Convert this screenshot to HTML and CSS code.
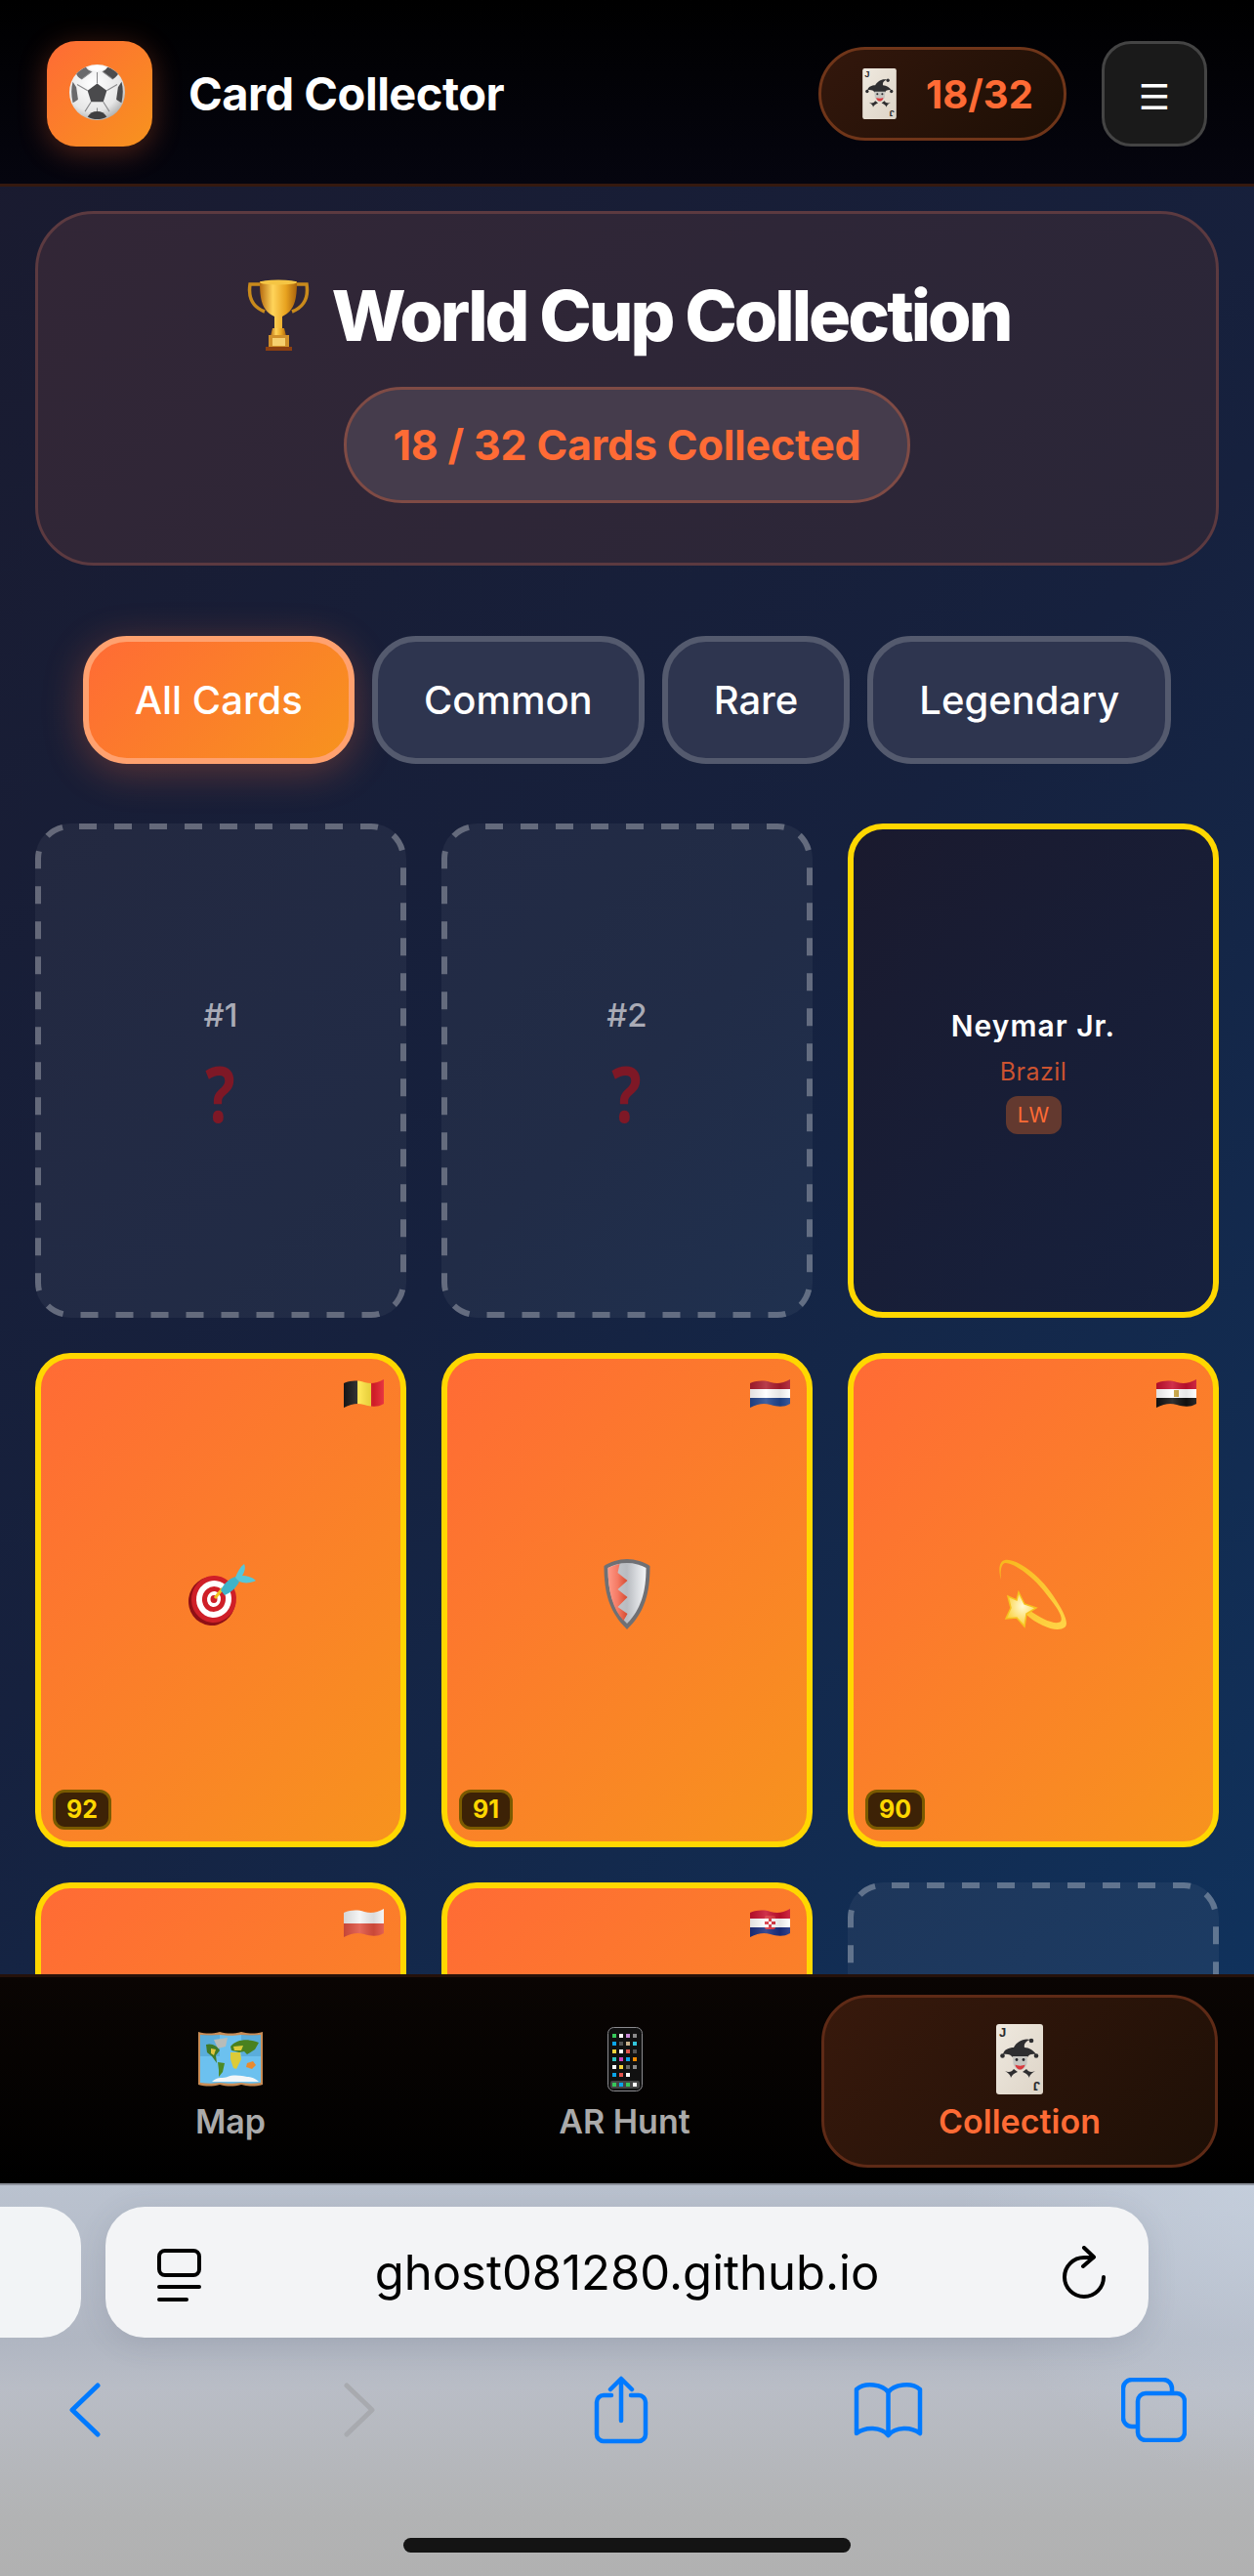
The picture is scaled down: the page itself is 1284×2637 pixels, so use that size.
FILE: index.html
```html
<!DOCTYPE html>
<html lang="en">

<head>
    <meta charset="UTF-8">
    <meta name="viewport" content="width=device-width, initial-scale=1.0">
    <title>Card Collector</title>
    <link rel="stylesheet" href="styles.css">
</head>

<body>
    <!-- shared drawings -->
    <svg class="defs" aria-hidden="true">
        <defs>
            <clipPath id="wave">
                <path d="M0 4C8 1 14 1 21 3S34 4 41 0V25C34 29 28 28 21 26S8 25 0 29Z" />
            </clipPath>
            <linearGradient id="gloss" x1="0" y1="0" x2="1" y2="0">
                <stop offset="0" stop-color="#000" stop-opacity=".12" />
                <stop offset=".4" stop-color="#fff" stop-opacity=".14" />
                <stop offset=".75" stop-color="#000" stop-opacity=".1" />
                <stop offset="1" stop-color="#fff" stop-opacity=".1" />
            </linearGradient>
            <linearGradient id="gold" x1="0" y1="0" x2="1" y2="0">
                <stop offset="0" stop-color="#b56a10" />
                <stop offset=".35" stop-color="#ffd45a" />
                <stop offset=".7" stop-color="#e8a320" />
                <stop offset="1" stop-color="#a9620c" />
            </linearGradient>
            <linearGradient id="steel" x1="0" y1="0" x2="1" y2="0">
                <stop offset="0" stop-color="#c9ccd0" />
                <stop offset=".5" stop-color="#b9bcc1" />
                <stop offset="1" stop-color="#f4f6f8" />
            </linearGradient>
            <linearGradient id="shieldRed" x1="0" y1="0" x2="1" y2="0">
                <stop offset="0" stop-color="#ff9a88" />
                <stop offset=".5" stop-color="#f47a64" />
                <stop offset="1" stop-color="#d64a30" />
            </linearGradient>
            <linearGradient id="ringGold" x1="0" y1="0" x2="1" y2="1">
                <stop offset="0" stop-color="#f7b71c" />
                <stop offset="1" stop-color="#ffd548" />
            </linearGradient>
            <radialGradient id="starFill" cx=".55" cy=".4" r=".6">
                <stop offset="0" stop-color="#fffbd6" />
                <stop offset="1" stop-color="#fbcf38" />
            </radialGradient>
            <radialGradient id="ballShade" cx=".42" cy=".35" r=".7">
                <stop offset="0" stop-color="#fff" />
                <stop offset=".7" stop-color="#e6e6e6" />
                <stop offset="1" stop-color="#a9a9a9" />
            </radialGradient>
            <linearGradient id="paper" x1="0" y1="0" x2="1" y2="1">
                <stop offset="0" stop-color="#efe9df" />
                <stop offset="1" stop-color="#ddd4c7" />
            </linearGradient>
            <symbol id="joker" viewBox="0 0 48 72">
                <rect width="48" height="72" rx="3" fill="url(#paper)" />
                <text x="3" y="13" class="joker-j">J</text>
                <text x="3" y="13" class="joker-j" transform="rotate(180 24 36)">J</text>
                <path d="M7 31C8 26 13 24 18 24C21 18 28 14 35 16C31 17 28 20 29 24C34 24 38 27 41 31C37 30 33 31 32 34H17C15 31 11 30 7 31Z" fill="#2e2e30" />
                <circle cx="6.500" cy="32.500" r="2.300" fill="#2e2e30" />
                <circle cx="41" cy="32.500" r="2.300" fill="#2e2e30" />
                <circle cx="36" cy="17" r="2.300" fill="#2e2e30" />
                <path d="M17 33H32L31.500 41C30 45 27 47 24.500 47C22 47 19 45 17.500 41Z" fill="#c6c5c0" />
                <circle cx="21" cy="36.500" r="1.400" fill="#27272a" />
                <circle cx="28" cy="36.500" r="1.400" fill="#27272a" />
                <path d="M19.500 41.500C22 43 27 43 29.500 41.500C29 45 26.500 46.500 24.500 46.500C22.500 46.500 20 45 19.500 41.500Z" fill="#d93a3e" />
                <path d="M9 48C13 50 16 49 18 46L22 49C19 50 16 52 15 55C15 52 12 50 9 48ZM40 48C36 50 33 49 31 46L27 49C30 50 33 52 34 55C34 52 37 50 40 48Z" fill="#2e2e30" />
            </symbol>
        </defs>
    </svg>

    <div class="screen">
        <div class="app">
            <header class="topbar">
                <div class="logo">
                    <svg class="ball" viewBox="0 0 64 64" aria-hidden="true">
                        <circle cx="32" cy="32" r="32" fill="url(#ballShade)" />
                        <path d="M32 22L43 30L39 43H25L21 30Z" fill="#4a4a4c" />
                        <path d="M21 3C27 9 37 9 43 3C37 0 27 0 21 3Z" fill="#fff" />
                        <path d="M44 3C42 6 40 7 38 8L50 17C54 14 55 13 56 11C53 7 49 5 44 3Z" fill="#4c4c4e" />
                        <path d="M19 3C21 6 23 7 26 8L14 17C10 15 9 13 8 11C11 7 15 5 19 3Z" fill="#6a6a6c" />
                        <path d="M60 20C62 27 62 35 60 44C57 42 55 41 54 40L56 26Z" fill="#4a4a4c" />
                        <path d="M4 20C2 27 2 35 4 44C7 42 9 41 10 40L8 26Z" fill="#6a6a6c" />
                        <path d="M21 60C28 64 36 64 43 60C40 56 37 54 32 54C27 54 24 56 21 60Z" fill="#3f3f41" />
                        <path d="M32 22V9M43 30L55 23M39 43L46 54M25 43L18 54M21 30L9 23M26 8L14 17M38 8L50 17M32 54V50" stroke="#8a8a8c" stroke-width="1.200" fill="none" />
                    </svg>
                </div>
                <div class="app-name">Card Collector</div>
                <div class="count-pill">
                    <svg class="joker-small" aria-hidden="true"><use href="#joker" /></svg>
                    <span>18/32</span>
                </div>
                <button class="menu-btn">☰</button>
            </header>

            <main class="content">
                <section class="hero">
                    <h1 class="hero-title">
                        <svg class="trophy" viewBox="0 0 70 73" aria-hidden="true">
                            <path d="M17 5H6C4 18 8 28 21 33M53 5H64C66 18 62 28 49 33" fill="none" stroke="#c98a1c" stroke-width="3.500" />
                            <path d="M16 2H54C54 20 52 32 39 38V50H31V38C18 32 16 20 16 2Z" fill="url(#gold)" />
                            <ellipse cx="35" cy="3" rx="19" ry="2.500" fill="#f5c544" />
                            <path d="M29 50H41L43 58H27Z" fill="url(#gold)" />
                            <rect x="25" y="57" width="21" height="13" fill="#d0902a" />
                            <rect x="29" y="60" width="13" height="8" fill="#f6cf6e" />
                            <rect x="22" y="69" width="27" height="4" fill="#8c3f10" />
                        </svg>
                        World Cup Collection
                    </h1>
                    <div class="hero-count">18 / 32 Cards Collected</div>
                </section>

                <nav class="filters">
                    <button class="filter active">All Cards</button>
                    <button class="filter">Common</button>
                    <button class="filter">Rare</button>
                    <button class="filter">Legendary</button>
                </nav>

                <div class="cards">
                    <div class="card missing">
                        <svg class="dash" viewBox="0 0 380 506" aria-hidden="true"><rect x="3" y="3" width="374" height="500" rx="33" /></svg>
                        <div class="card-num">#1</div>
                        <div class="card-unknown">?</div>
                    </div>
                    <div class="card missing">
                        <svg class="dash" viewBox="0 0 380 506" aria-hidden="true"><rect x="3" y="3" width="374" height="500" rx="33" /></svg>
                        <div class="card-num">#2</div>
                        <div class="card-unknown">?</div>
                    </div>
                    <div class="card back">
                        <div class="player-name">Neymar Jr.</div>
                        <div class="player-country">Brazil</div>
                        <div class="player-pos">LW</div>
                    </div>

                    <div class="card owned">
                        <svg class="flag" viewBox="0 0 41 29" aria-hidden="true">
                            <g clip-path="url(#wave)">
                                <rect width="14" height="29" fill="#1a1a1a" />
                                <rect x="14" width="14" height="29" fill="#fde23c" />
                                <rect x="28" width="13" height="29" fill="#e5202c" />
                                <rect width="41" height="29" fill="url(#gloss)" />
                            </g>
                        </svg>
                        <svg class="skill" viewBox="0 0 72 62" aria-hidden="true">
                            <ellipse cx="27" cy="38" rx="24" ry="25" fill="#8f0f16" transform="rotate(8 27 38)" />
                            <ellipse cx="29" cy="36" rx="23" ry="24" fill="#cf1f28" transform="rotate(8 29 36)" />
                            <ellipse cx="29" cy="36" rx="18" ry="19" fill="#fff" transform="rotate(8 29 36)" />
                            <ellipse cx="29" cy="36" rx="12" ry="13" fill="#cf1f28" transform="rotate(8 29 36)" />
                            <ellipse cx="29" cy="36" rx="7" ry="8" fill="#fff" transform="rotate(8 29 36)" />
                            <ellipse cx="29" cy="36" rx="3.500" ry="4" fill="#cf1f28" />
                            <path d="M30 35L38 25" stroke="#f2c21d" stroke-width="3" />
                            <path d="M36 27C39 20 45 15 51 13L55 18C52 24 47 29 40 32Z" fill="#3fb3c9" />
                            <path d="M51 14C53 8 56 3 60 0C62 4 60 9 58 12C62 12 68 13 72 17C66 20 60 20 55 18Z" fill="#58c6d8" />
                        </svg>
                        <div class="rating">92</div>
                    </div>
                    <div class="card owned">
                        <svg class="flag" viewBox="0 0 41 29" aria-hidden="true">
                            <g clip-path="url(#wave)">
                                <rect width="41" height="10" fill="#ad1d2e" />
                                <rect y="10" width="41" height="9" fill="#fff" />
                                <rect y="19" width="41" height="10" fill="#22468f" />
                                <rect width="41" height="29" fill="url(#gloss)" />
                            </g>
                        </svg>
                        <svg class="skill" viewBox="0 0 47 72" aria-hidden="true">
                            <path d="M23.500 0C32 0 41 3 47 7C47 34 42 54 23.500 72C5 54 0 34 0 7C6 3 15 0 23.500 0Z" fill="#6f7074" />
                            <path d="M23.500 4C31 4 38 6 43 9C43 33 38 51 23.500 66C9 51 4 33 4 9C9 6 16 4 23.500 4Z" fill="url(#steel)" />
                            <path d="M16 5C12 6 8 7 4 9C4 33 9 51 20 63L24 56L14 49L24 39L14 31L24 22L14 14Z" fill="url(#shieldRed)" />
                        </svg>
                        <div class="rating">91</div>
                    </div>
                    <div class="card owned">
                        <svg class="flag" viewBox="0 0 41 29" aria-hidden="true">
                            <g clip-path="url(#wave)">
                                <rect width="41" height="10" fill="#c8102e" />
                                <rect y="10" width="41" height="9" fill="#fff" />
                                <rect y="19" width="41" height="10" fill="#111" />
                                <rect x="18" y="11" width="5" height="7" fill="#c8a33c" />
                                <rect width="41" height="29" fill="url(#gloss)" />
                            </g>
                        </svg>
                        <svg class="skill" viewBox="0 0 70 72" aria-hidden="true">
                            <path d="M2 21C-1 11 0 2 6 1C16 -1 40 14 55 37C67 55 72 66 67 70C60 75 42 70 27 56L31 52C42 61 58 68 63 64C66 60 60 50 50 38C36 18 14 3 6 4C2 5 1 13 2 21Z" fill="url(#ringGold)" />
                            <path d="M20 34L26 46L38 50L28 56L26 69L18 60L7 61L12 50L9 38L18 42Z" fill="url(#starFill)" stroke="#f6c21f" stroke-width="1.500" />
                        </svg>
                        <div class="rating">90</div>
                    </div>

                    <div class="card owned">
                        <svg class="flag" viewBox="0 0 41 29" aria-hidden="true">
                            <g clip-path="url(#wave)">
                                <rect width="41" height="15" fill="#f4f4f4" />
                                <rect y="15" width="41" height="14" fill="#e0503f" />
                                <rect width="41" height="29" fill="url(#gloss)" />
                            </g>
                        </svg>
                    </div>
                    <div class="card owned">
                        <svg class="flag" viewBox="0 0 41 29" aria-hidden="true">
                            <g clip-path="url(#wave)">
                                <rect width="41" height="10" fill="#c8102e" />
                                <rect y="10" width="41" height="9" fill="#fff" />
                                <rect y="19" width="41" height="10" fill="#1c2f80" />
                                <rect x="15" y="7" width="11" height="14" rx="2" fill="#d9303c" />
                                <path d="M15 10h4v3h-4zM22 10h4v3h-4zM19 13h3v3h-3zM15 16h4v3h-4zM22 16h4v3h-4z" fill="#fff" />
                                <rect width="41" height="29" fill="url(#gloss)" />
                            </g>
                        </svg>
                    </div>
                    <div class="card missing">
                        <svg class="dash" viewBox="0 0 380 506" aria-hidden="true"><rect x="3" y="3" width="374" height="500" rx="33" /></svg>
                    </div>
                </div>
            </main>

            <nav class="bottom-nav">
                <div class="nav-item">
                    <div class="nav-icon">
                        <svg class="map-icon" viewBox="0 0 66 58" aria-hidden="true">
                            <path d="M0 1C8 3 14 3 22 1C30 3 36 3 44 1C52 3 58 3 66 1V55C58 57 52 57 44 55C36 57 30 57 22 55C14 57 8 57 0 55Z" fill="#c88c56" />
                            <path d="M2 4C8 5 14 5 22 4C30 5 36 5 44 4C52 5 58 5 64 4V53C58 54 52 54 44 53C36 54 30 54 22 53C14 54 8 54 2 53Z" fill="#6cc1ef" />
                            <path d="M2 4H22V26H2ZM44 4H64V26H44Z" fill="#4d9ccb" opacity=".55" />
                            <path d="M16 9L30 7L28 16L20 18Z" fill="#b8bcb9" />
                            <path d="M8 14C14 12 20 16 22 20L18 25L19 33L14 26L9 22Z" fill="#3f7a27" />
                            <path d="M13 18L18 19L16 25L13 23Z" fill="#e0c53c" />
                            <path d="M20 32L27 33L25 42L21 47L21 40Z" fill="#4c8a25" />
                            <path d="M33 16C40 8 52 8 62 12L58 19L50 24L47 21L42 22L34 20Z" fill="#49811f" />
                            <path d="M36 16L46 15L44 20L37 20ZM33 22L43 22L44 29L39 39L36 38L33 29Z" fill="#dccb38" />
                            <path d="M50 33L56 31L59 35L55 39L49 37Z" fill="#e98a2e" />
                            <path d="M14 52C20 46 26 49 30 47C36 44 46 46 50 47C56 47 60 50 62 52Z" fill="#f2f6f8" />
                        </svg>
                    </div>
                    <div class="nav-label">Map</div>
                </div>
                <div class="nav-item">
                    <div class="nav-icon">
                        <svg class="phone-icon" viewBox="0 0 36 66" aria-hidden="true">
                            <rect x="0.500" y="0.500" width="35" height="65" rx="6" fill="#111" stroke="#8b8b8f" />
                            <g class="app-dots">
                                <rect x="5" y="7" width="4" height="4" fill="#35c759" /><rect x="12" y="7" width="4" height="4" fill="#fff" /><rect x="19" y="7" width="4" height="4" fill="#c98bd8" /><rect x="26" y="7" width="4" height="4" fill="#8a8a8a" />
                                <rect x="5" y="15" width="4" height="4" fill="#0aa5ea" /><rect x="12" y="15" width="4" height="4" fill="#555" /><rect x="19" y="15" width="4" height="4" fill="#c8b08c" /><rect x="26" y="15" width="4" height="4" fill="#33c6dc" />
                                <rect x="5" y="23" width="4" height="4" fill="#f2d33c" /><rect x="12" y="23" width="4" height="4" fill="#fff" /><rect x="19" y="23" width="4" height="4" fill="#e5534b" /><rect x="26" y="23" width="4" height="4" fill="#555" />
                                <rect x="5" y="31" width="4" height="4" fill="#2ec4c4" /><rect x="12" y="31" width="4" height="4" fill="#d13fc0" /><rect x="19" y="31" width="4" height="4" fill="#0aa5ea" /><rect x="26" y="31" width="4" height="4" fill="#f08a00" />
                                <rect x="5" y="39" width="4" height="4" fill="#fff" /><rect x="12" y="39" width="4" height="4" fill="#f2d33c" /><rect x="19" y="39" width="4" height="4" fill="#666" /><rect x="26" y="39" width="4" height="4" fill="#8a8a8a" />
                                <rect x="5" y="47" width="4" height="4" fill="#0aa5ea" /><rect x="12" y="47" width="4" height="4" fill="#e5534b" /><rect x="19" y="47" width="4" height="4" fill="#fff" />
                                <rect x="3" y="55" width="30" height="8" rx="2" fill="#444" />
                                <rect x="5" y="57" width="4" height="4" fill="#35c759" /><rect x="12" y="57" width="4" height="4" fill="#0aa5ea" /><rect x="19" y="57" width="4" height="4" fill="#35c759" /><rect x="26" y="57" width="4" height="4" fill="#fff" />
                            </g>
                        </svg>
                    </div>
                    <div class="nav-label">AR Hunt</div>
                </div>
                <div class="nav-item active">
                    <div class="nav-icon">
                        <svg class="joker-big" aria-hidden="true"><use href="#joker" /></svg>
                    </div>
                    <div class="nav-label">Collection</div>
                </div>
            </nav>
        </div>

        <div class="browser">
            <div class="url-row">
                <div class="tab-stub"></div>
                <div class="url-bar">
                    <svg class="reader" viewBox="0 0 45 54" aria-hidden="true">
                        <rect x="2" y="2" width="41" height="25" rx="6" />
                        <path d="M2 39H43M2 52H30" />
                    </svg>
                    <div class="url-text">ghost081280.github.io</div>
                    <svg class="reload" viewBox="0 0 44 54" aria-hidden="true">
                        <path d="M42 32A20 20 0 1 1 22 12H31" />
                        <path d="M22 2L32 11.500L21 21" />
                    </svg>
                </div>
            </div>
            <div class="tool-row">
                <svg class="chevron" viewBox="0 0 32 56" aria-hidden="true">
                    <path d="M29 3L3 28L29 53" />
                </svg>
                <svg class="chevron off" viewBox="0 0 32 56" aria-hidden="true">
                    <path d="M3 3L29 28L3 53" />
                </svg>
                <svg class="share" viewBox="0 0 56 70" aria-hidden="true">
                    <path d="M18 20H10A7 7 0 0 0 3 27V60A7 7 0 0 0 10 67H46A7 7 0 0 0 53 60V27A7 7 0 0 0 46 20H38" />
                    <path d="M28 46V4M17 14L28 3L39 14" />
                </svg>
                <svg class="book" viewBox="0 0 71 58" aria-hidden="true">
                    <path d="M35.500 11C30 3 12 0 3 8V53C12 46 28 46 35.500 55C43 46 59 46 68 53V8C59 0 41 3 35.500 11ZM35.500 11V55" />
                </svg>
                <svg class="tabs" viewBox="0 0 67 66" aria-hidden="true">
                    <path d="M15 50H11A9 9 0 0 1 2 41V11A9 9 0 0 1 11 2H43A9 9 0 0 1 52 11V15" />
                    <rect x="17" y="16" width="48" height="48" rx="8" />
                </svg>
            </div>
            <div class="home-bar"></div>
        </div>
    </div>
</body>

</html>
```

FILE: styles.css
```css
* {
    box-sizing: border-box;
}

body {
    margin: 0;
    background-color: #000;
    font-family: "Inter", "Liberation Sans", sans-serif;
}

.defs {
    position: absolute;
    width: 0;
    height: 0;
}

.joker-j {
    font-family: "Liberation Sans", sans-serif;
    font-size: 13px;
    font-weight: 700;
    fill: #2b2b2d;
}

.screen {
    width: 1284px;
    height: 2637px;
    display: flex;
    flex-direction: column;
    overflow: hidden;
}

.app {
    height: 2235px;
    display: flex;
    flex-direction: column;
    background: linear-gradient(135deg, #1a1a2e 0%, #16213e 50%, #0f3460 100%);
}

/* top bar */
.topbar {
    height: 191px;
    flex-shrink: 0;
    display: flex;
    align-items: flex-start;
    padding: 42px 48px 0;
    background: linear-gradient(180deg, #000 0%, #05050f 100%);
    border-bottom: 3px solid #35190f;
}

.logo {
    width: 108px;
    height: 108px;
    border-radius: 30px;
    background: linear-gradient(135deg, #ff6b35, #f7931e);
    box-shadow: 0 6px 30px rgba(255, 107, 53, 0.3);
    display: flex;
    align-items: center;
    justify-content: center;
}

.ball {
    width: 57px;
    height: 57px;
    margin-top: -4px;
    margin-left: -6px;
}

.app-name {
    margin-left: 37px;
    line-height: 108px;
    font-size: 47px;
    font-weight: 700;
    letter-spacing: -0.5px;
    color: #fff;
}

.count-pill {
    margin-left: auto;
    margin-top: 6px;
    width: 254px;
    height: 96px;
    display: flex;
    align-items: center;
    padding-left: 42px;
    gap: 30px;
    border-radius: 48px;
    border: 3px solid #6f3519;
    background: linear-gradient(135deg, #33170c, #1d0f05);
    font-size: 40px;
    font-weight: 700;
    color: #ff6b35;
}

.joker-small {
    width: 35px;
    height: 52px;
}

.menu-btn {
    margin-left: 36px;
    width: 108px;
    height: 108px;
    padding: 8px 0 0;
    border-radius: 30px;
    border: 3px solid #444;
    background-color: #1a1a1a;
    color: #fff;
    font-family: "DejaVu Sans", sans-serif;
    font-size: 36px;
    line-height: 1;
}

/* main */
.content {
    flex: 1;
    min-height: 0;
    overflow: hidden;
    padding: 25px 36px 0;
}

.hero {
    height: 363px;
    display: flex;
    flex-direction: column;
    align-items: center;
    padding-top: 61px;
    border-radius: 60px;
    border: 3px solid #5c3a40;
    background: linear-gradient(135deg, #322636, #2a2638);
}

.hero-title {
    margin: 0;
    display: flex;
    align-items: center;
    height: 84px;
    gap: 20px;
    font-size: 72px;
    font-weight: 800;
    letter-spacing: -3px;
    color: #fff;
}

.trophy {
    width: 70px;
    height: 73px;
}

.hero-count {
    margin-top: 32px;
    width: 580px;
    height: 119px;
    line-height: 113px;
    text-align: center;
    border-radius: 60px;
    border: 3px solid #7f4b45;
    background-color: #453c4c;
    font-size: 43px;
    font-weight: 700;
    letter-spacing: -0.2px;
    color: #ff6b35;
}

.filters {
    margin-top: 72px;
    display: flex;
    justify-content: center;
    gap: 18px;
}

.filter {
    height: 131px;
    padding: 0 47px;
    border-radius: 45px;
    border: 6px solid #545a6e;
    background-color: #2e354f;
    color: #fff;
    font-family: inherit;
    font-size: 40px;
    font-weight: 500;
}

.filter.active {
    border-color: #ffa16f;
    background: linear-gradient(135deg, #ff6b35, #f7931e);
    box-shadow: 0 8px 40px rgba(255, 107, 53, 0.3);
}

/* cards */
.cards {
    margin-top: 61px;
    display: grid;
    grid-template-columns: repeat(3, 1fr);
    gap: 36px;
}

.card {
    position: relative;
    height: 506px;
    border-radius: 36px;
    border: 6px solid #ffd700;
    display: flex;
    flex-direction: column;
    align-items: center;
    justify-content: center;
}

.missing {
    border: 0;
    background-color: rgba(255, 255, 255, 0.05);
    padding-bottom: 16px;
}

/* dashes are longer than a css dashed border gives */
.dash {
    position: absolute;
    top: 0;
    left: 0;
    width: 100%;
    height: 100%;
    fill: none;
    stroke: rgba(255, 255, 255, 0.3);
    stroke-width: 6;
    stroke-dasharray: 18 18;
    stroke-dashoffset: -9;
}

.card-num {
    font-size: 33px;
    font-weight: 500;
    color: #a9abb6;
}

.card-unknown {
    margin-top: 21px;
    font-family: "Open Sans", sans-serif;
    font-size: 78px;
    line-height: 78px;
    font-weight: 700;
    color: #7e1826;
    transform: scaleX(0.82);
}

.back {
    background: linear-gradient(135deg, #1a1a2e, #16213e);
}

.player-name {
    font-size: 30px;
    font-weight: 600;
    letter-spacing: 1px;
    color: #fff;
}

.player-country {
    margin-top: 14px;
    font-size: 25px;
    letter-spacing: 0.5px;
    color: #cc5330;
}

.player-pos {
    margin-top: 10px;
    width: 57px;
    height: 39px;
    line-height: 39px;
    text-align: center;
    border-radius: 12px;
    background-color: #63392f;
    font-size: 21px;
    color: #ff6b35;
}

.owned {
    background: linear-gradient(135deg, #ff6b35, #f7931e);
    padding-bottom: 12px;
}

.flag {
    position: absolute;
    top: 21px;
    right: 17px;
    width: 41px;
    height: 29px;
}

.skill {
    height: 72px;
    width: 72px;
}

.rating {
    position: absolute;
    left: 12px;
    bottom: 12px;
    height: 41px;
    line-height: 35px;
    padding: 0 11px;
    border-radius: 12px;
    border: 3px solid #7a5a00;
    background-color: #3d2206;
    font-size: 25px;
    font-weight: 700;
    color: #ffd700;
}

/* bottom nav */
.bottom-nav {
    height: 214px;
    flex-shrink: 0;
    display: grid;
    grid-template-columns: 404px 403px 1fr;
    padding: 18px 37px 0 34px;
    align-items: start;
    border-top: 3px solid #25110a;
    background: linear-gradient(180deg, #0a0503 0%, #000 100%);
}

.nav-item {
    height: 177px;
    display: flex;
    flex-direction: column;
    align-items: center;
    padding-top: 27px;
    border: 3px solid transparent;
    border-radius: 48px;
    font-size: 34px;
    font-weight: 600;
    color: #aaa;
}

.nav-item.active {
    border-color: #5e2a16;
    background: linear-gradient(135deg, #38190c, #1d0f06);
    color: #ff6b35;
}

.nav-icon {
    height: 72px;
    display: flex;
    align-items: center;
}

.nav-label {
    margin-top: 8px;
    line-height: 40px;
}

.map-icon {
    width: 66px;
    height: 58px;
}

.phone-icon {
    width: 36px;
    height: 66px;
}

.joker-big {
    width: 48px;
    height: 72px;
}

/* browser chrome */
.browser {
    flex: 1;
    display: flex;
    flex-direction: column;
    border-top: 2px solid #8d929c;
    background: radial-gradient(circle at 100% 0, rgba(198, 208, 222, 0.8), rgba(198, 208, 222, 0) 300px),
        linear-gradient(180deg, #bac2cf 0%, #b0b6c2 40%, #b9bdc6 52%, #b2b3b4 85%, #b1b1b1 100%);
}

.url-row {
    margin-top: 22px;
    height: 134px;
    display: flex;
    gap: 25px;
}

.tab-stub {
    width: 83px;
    border-radius: 0 40px 40px 0;
    background-color: #f2f4f6;
}

.url-bar {
    width: 1068px;
    display: flex;
    align-items: center;
    padding: 0 44px 0 53px;
    border-radius: 40px;
    background-color: #f3f4f6;
    box-shadow: 0 6px 30px rgba(70, 80, 100, 0.14);
}

.reader {
    width: 45px;
    height: 54px;
    margin-top: 6px;
    fill: none;
    stroke: #000;
    stroke-width: 4;
    stroke-linecap: round;
}

.url-text {
    flex: 1;
    margin-right: 10px;
    text-align: center;
    font-size: 49px;
    color: #000;
}

.reload {
    width: 44px;
    height: 54px;
    fill: none;
    stroke: #000;
    stroke-width: 4;
    stroke-linecap: round;
    stroke-linejoin: round;
}

.tool-row {
    height: 70px;
    margin-top: 39px;
    display: flex;
    align-items: center;
}

.tool-row svg {
    flex-shrink: 0;
    fill: none;
    stroke: #007aff;
    stroke-width: 4.5;
    stroke-linecap: round;
    stroke-linejoin: round;
}

.chevron {
    width: 32px;
    height: 56px;
    margin-left: 71px;
}

.tool-row .chevron {
    stroke-width: 5;
}

.chevron.off {
    margin-left: 249px;
}

.tool-row .chevron.off {
    stroke: #a8aaaf;
}

.share {
    width: 56px;
    height: 70px;
    margin-left: 224px;
}

.book {
    width: 71px;
    height: 58px;
    margin-left: 210px;
}

.tabs {
    width: 67px;
    height: 66px;
    margin-left: 203px;
}

.home-bar {
    margin: 96px auto 0;
    width: 458px;
    height: 15px;
    border-radius: 8px;
    background-color: #141414;
}
```
